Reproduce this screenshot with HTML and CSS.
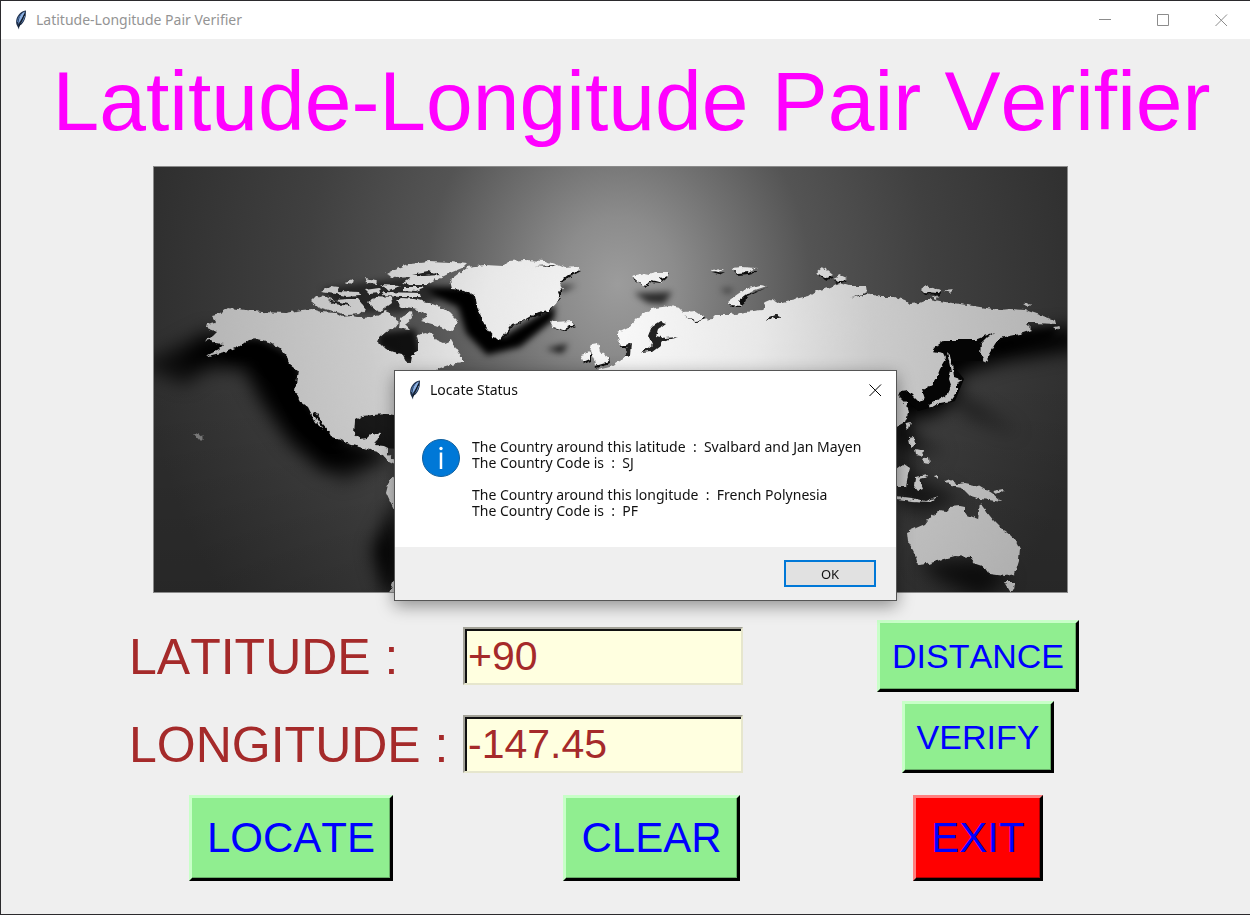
FILE: index.html
```html
<!DOCTYPE html>
<html lang="en">
<head>
<meta charset="utf-8">
<title>Latitude-Longitude Pair Verifier</title>
<link rel="stylesheet" href="styles.css">
</head>
<body>
<svg class="defs" aria-hidden="true">
  <symbol id="feather" viewBox="0 0 12 20">
    <path d="M11 0.500C7 1 3 4 1.500 9C0.800 12 1 14 2.500 16.500L4 19.500L4.300 16C8 14 10 10 10.700 6Z" fill="#1d2f4c"/>
    <path d="M10 1.500C6 3 4 7 3.200 14C6 10 8.500 6 10 1.500Z" fill="#8db2e4"/>
    <path d="M9.500 6C9 9 7 12 5 14" stroke="#6d90c2" stroke-width="1" fill="none"/>
    <path d="M6 4.500C4 6 2.500 9 2.500 12" stroke="#5077ad" stroke-width="1" fill="none"/>
    <path d="M9.700 4L3.700 17" stroke="#101820" stroke-width="1" fill="none"/>
  </symbol>
</svg>
<main class="window">
  <header class="titlebar">
    <svg class="feather"><use href="#feather"/></svg>
    <span class="titlebar-text">Latitude-Longitude Pair Verifier</span>
    <div class="controls">
      <button class="control" type="button" aria-label="Minimize"><svg viewBox="0 0 13 13"><path d="M0 5.500H12"/></svg></button>
      <button class="control" type="button" aria-label="Maximize"><svg viewBox="0 0 13 13"><path d="M0.500 0.500H11.500V11.500H0.500Z"/></svg></button>
      <button class="control" type="button" aria-label="Close"><svg viewBox="0 0 13 13"><path d="M0.500 0.500L12 12M12 0.500L0.500 12"/></svg></button>
    </div>
  </header>

  <h1 class="heading">Latitude-Longitude Pair Verifier</h1>

  <div class="map">
    <svg viewBox="153 167 915 427" role="img" aria-label="World map">
      <defs>
        <radialGradient id="sea" gradientUnits="userSpaceOnUse" cx="618" cy="285" r="480" gradientTransform="translate(618 285) scale(1 1.150) translate(-618 -285)">
          <stop offset="0" stop-color="#9c9c9c"/><stop offset="0.120" stop-color="#8c8c8c"/><stop offset="0.250" stop-color="#717171"/><stop offset="0.400" stop-color="#545454"/><stop offset="0.650" stop-color="#404040"/><stop offset="1" stop-color="#2e2e2e"/>
        </radialGradient>
        <radialGradient id="land" gradientUnits="userSpaceOnUse" cx="620" cy="330" r="460">
          <stop offset="0" stop-color="#f8f8f8"/><stop offset="0.300" stop-color="#e8e8e8"/><stop offset="0.550" stop-color="#cbcbcb"/><stop offset="1" stop-color="#b0b0b0"/>
        </radialGradient>
        <linearGradient id="floor" x1="0" y1="0" x2="0" y2="1">
          <stop offset="0.500" stop-color="#000" stop-opacity="0"/><stop offset="1" stop-color="#000" stop-opacity="0.150"/>
        </linearGradient>
        <filter id="soft" x="-30%" y="-30%" width="160%" height="160%"><feGaussianBlur stdDeviation="9"/></filter>
        <filter id="near" x="-30%" y="-30%" width="160%" height="160%"><feGaussianBlur stdDeviation="3"/></filter>
        <filter id="coast" x="-5%" y="-5%" width="110%" height="110%">
          <feTurbulence type="fractalNoise" baseFrequency="0.180" numOctaves="2" seed="4"/>
          <feDisplacementMap in="SourceGraphic" scale="5" xChannelSelector="R" yChannelSelector="G"/>
        </filter>
      </defs>
      <rect x="153" y="167" width="915" height="427" fill="url(#sea)"/>
      <rect x="153" y="167" width="915" height="427" fill="url(#floor)"/>

      <g filter="url(#soft)">
        <path d="M175 368L205 336L250 340L290 355L310 402L345 440L392 452L350 468L325 474L290 444L262 404L244 370L215 368Z"/>
        <path d="M140 366L210 330L230 354L185 386Z" opacity="0.700"/>
        <path d="M310 420L390 462L340 484Z" opacity="0.600"/>
        <path d="M398 500L398 594L385 594L372 550Z"/>
        <path d="M925 352L985 336L1080 328L1080 350L1005 362L960 375L955 404L930 418L905 420L915 440L945 455L895 445L890 370Z"/>
        <path d="M955 392L1020 435L965 415Z" opacity="0.600"/>
        <path d="M890 420L920 480L960 500L920 515L894 500Z" opacity="0.600"/>
        <path d="M915 562L985 560L1010 580L980 600L940 582Z" opacity="0.700"/>
      </g>
      <g filter="url(#near)">
        <path d="M220 344L260 342L285 356L298 372L296 398L318 424L345 445L330 448L296 418L280 380L255 360L225 358Z"/>
        <path d="M425 288L475 288L485 320L503 338L555 306L554 320L520 348L487 356L466 334L458 308L440 300Z"/>
        <path d="M378 334L415 330L421 358L410 366L378 348Z" opacity="0.800"/>
        <path d="M634 294L672 293L664 305L648 304Z" opacity="0.700"/>
        <path d="M546 350L568 345L562 354Z" opacity="0.900"/>
        <path d="M556 287L577 286L562 293Z" opacity="0.700"/>
        <path d="M720 290L734 290L728 294Z" opacity="0.700"/>
        <path d="M322 290L420 276L440 300L400 314L340 312Z" opacity="0.500"/>
        <path d="M985 338L1060 328L1050 340L1000 352Z" opacity="0.800"/>
      </g>
      <g fill="#050505">
        <path d="M348 410H400V450L350 447Z" opacity="0.700"/>
        <path d="M898 378L925 388L948 360L964 380L955 402L918 412L905 400Z"/>
        <path d="M928 352L945 341L998 332L984 362L950 362Z"/>
      </g>

      <g filter="url(#coast)">
        <g fill="#111" transform="translate(1 1)">
          <path d="M450 281L467 270L508 266L558 268L580 271L560 282L560 298L548 312L512 325L500 341L482 322L474 296L452 290Z"/>
          <path d="M632 279L645 275L652 278L668 273L666 278L660 283L650 282L644 287Z"/>
          <path d="M550 322L572 322L574 326L563 331L553 328Z"/>
          <path d="M727 303L767 287L746 297L741 307L731 307Z"/>
          <path d="M711 273L724 272L718 275ZM732 271L757 271L748 274L736 275ZM816 275L833 277L826 280ZM833 280L847 280L838 284ZM921 291L941 292L939 295L924 294Z"/>
          <path d="M592 344L600 352L608 358L609 364L595 368ZM581 357L590 354L590 361L583 364Z"/>
          <path d="M618 341L621 347H628L635 344L700 324L703 318L650 325Z"/>
        </g>
        <g fill="url(#land)">
          <path d="M205 342L213 337L217 333L206 329L207 325L216 323L212 316L220 314L228 309L238 310L262 313L285 314L302 311L312 310L322 313L335 314L342 318L352 317L362 319L372 318L380 316L385 311L390 313L395 320L399 323L394 329L387 332L380 338L378 343L385 350L393 353L402 355L406 363L411 363L412 357L418 351L418 342L416 335L425 333L432 335L437 341L444 344L451 341L455 348L462 358L462 364L450 366L440 369L432 373L470 390L400 417L388 415L372 416L362 417L355 421L354 436L360 440L368 439L373 434L380 435L375 446L384 447L388 449L388 456L396 462V466L388 462L384 457L378 453L370 451L352 446L340 441L332 438L331 434L323 425L314 412L313 415L324 431L316 424L308 408L300 402L295 392L298 371L290 365L285 355L280 349L270 343L258 340L248 341L240 347L228 352L204 358L218 351L224 345L215 344L211 341Z"/>
          <path d="M450 281L467 268L485 266L503 267L508 262L525 261L545 262L558 266L565 269L578 268L580 271L568 276L560 282L562 288L558 293L560 298L556 305L548 312L535 315L525 321L512 325L506 333L500 341L493 338L487 330L482 322L481 316L476 306L474 296L465 291L452 290Z"/>
          <path d="M386 275L395 270L410 264L430 262L450 263L466 265L462 269L450 274L440 279L427 286L410 286L403 284L412 278L395 279Z"/>
          <path d="M311 302L316 297L326 298L335 301L348 300L358 300L366 310L360 315L348 316L332 312L318 308Z"/>
          <path d="M321 293L331 287L339 288L338 292L359 293L360 296L345 297L335 295Z"/>
          <path d="M345 283L354 281L353 285ZM364 279L377 281L376 285L366 283ZM365 291L379 289L380 294L369 295ZM382 293L420 294L421 298L400 298L385 297Z"/>
          <path d="M367 303L377 297L391 298L392 304L384 310L378 313L372 308Z"/>
          <path d="M396 302L402 299L414 300L427 303L440 308L450 314L459 323L455 327L449 332L441 328L432 325L421 322L428 318L422 312L412 310L402 308Z"/>
          <path d="M400 320L411 312L412 319L405 325L411 331L399 330Z"/>
          <path d="M380 286L400 287L390 291ZM404 288L425 288L415 292L404 291Z"/>
          <path d="M618 340L618 334L628 329L636 320L648 312L655 309L670 307L680 309L684 313L695 312L703 317L701 321L712 320L716 316L730 316L745 313L762 311L765 303L772 300L778 304L795 300L808 297L815 292L828 289L840 284L850 287L866 287L867 294L880 298L895 298L905 301L910 305L920 304L930 300L945 303L960 305L980 308L1000 311L1010 310L1025 311L1040 316L1055 321L1056 325L1034 324L1025 324L1032 331L1020 335L1000 339L996 345L990 355L985 364L980 355L981 345L988 338L995 333L975 341L945 341L935 348L932 352L943 354L946 360L940 370L936 380L932 386L922 391L925 400L919 403L914 398L908 392L900 393L897 396L906 405L908 415L905 423L892 430H600L593 372L610 368L625 359L629 355L628 346L621 346Z"/>
          <path d="M592 345L598 344L600 352L608 358L609 363L595 367L594 360L590 352ZM581 356L590 353L590 360L583 363Z"/>
          <path d="M550 322L554 323L572 322L574 325L563 331L553 328Z"/>
          <path d="M632 277L645 274L650 275L654 273L668 273L668 277L660 279L663 284L656 282L650 281L644 287L636 281Z"/>
          <path d="M711 271L724 270L718 274ZM732 269L742 268L757 269L748 273L736 274Z"/>
          <path d="M727 303L735 297L745 290L760 286L767 287L755 291L746 296L739 302L741 307L731 306Z"/>
          <path d="M816 274L822 269L827 271L833 276L826 279ZM833 279L840 276L847 279L838 283ZM921 290L925 287L941 291L939 294L924 293ZM944 291L954 290L950 294ZM932 298L938 297L937 300ZM1023 305L1032 304L1028 308ZM1053 328L1060 327L1057 331Z"/>
          <path d="M947 353L950 356L953 370L954 378L963 381L956 384L956 395L951 402L940 404L930 410L928 406L938 401L948 395L951 386L949 380L951 372Z"/>
          <path d="M907 424L911 423L909 430L906 429ZM909 439L914 438L915 446L911 449ZM915 450L924 452L923 457L916 455ZM922 460L928 458L929 465L923 464Z"/>
          <path d="M896 471L904 465L910 469L908 477L906 488L896 488Z"/>
          <path d="M915 478L928 476L927 478L919 480L923 490L918 492L914 487ZM934 476L938 475L938 480ZM896 497L912 499L925 502L938 498L930 503L912 502L896 500Z"/>
          <path d="M945 482L950 480L957 485L965 484L980 487L992 494L1002 503L990 501L980 500L970 497L962 489L950 487ZM992 492L1002 490L1004 492L996 495Z"/>
          <path d="M907 533L925 525L930 518L938 512L947 513L950 508L960 507L965 508L965 515L978 520L980 504L986 512L994 522L1003 531L1015 540L1020 550L1019 562L1015 575L1005 577L990 575L985 568L976 565L970 558L955 557L940 561L928 565L918 566L915 555L908 542Z"/>
          <path d="M1004 583L1015 583L1014 590L1010 593Z"/>
          <path d="M396 475L388 485L386 493L390 502L396 514ZM396 575L389 594H396Z"/>
          <path d="M193 434L198 435L203 439L200 442Z" fill="#777"/>
        </g>
        <g fill="#202020">
          <path d="M641 354L652 346L648 337L652 327L660 322L666 324L658 330L656 337L665 339L678 338L663 342L660 347L652 353Z"/>
          <path d="M627 346L631 344L630 356L625 358Z"/>
          <path d="M684 317L695 322L703 321L696 324Z"/>
          <path d="M768 319L778 315L780 319L774 319L766 322Z"/>
          <path d="M850 299L868 293L867 295Z"/>
          <path d="M535 267L556 266L550 268Z"/>
          <path d="M328 300L348 305L350 307L334 305Z"/>
          <path d="M412 275L428 272L440 276L424 277Z"/>
        </g>
      </g>
    </svg>
  </div>

  <form class="panel">
    <label class="label" for="latitude">LATITUDE :</label>
    <input class="entry" id="latitude" type="text" value="+90">
    <button class="action small" type="button">DISTANCE</button>
    <label class="label" for="longitude">LONGITUDE :</label>
    <input class="entry" id="longitude" type="text" value="-147.45">
    <button class="action small raised" type="button">VERIFY</button>
    <button class="action" type="button">LOCATE</button>
    <button class="action" type="button">CLEAR</button>
    <button class="action exit" type="button">EXIT</button>
  </form>

  <section class="dialog" role="dialog" aria-labelledby="dialog-title">
    <header class="dialog-bar">
      <svg class="feather"><use href="#feather"/></svg>
      <h2 class="dialog-title" id="dialog-title">Locate Status</h2>
      <button class="dialog-close" type="button" aria-label="Close"><svg viewBox="0 0 13 13"><path d="M0.500 0.500L12 12M12 0.500L0.500 12"/></svg></button>
    </header>
    <div class="dialog-body">
      <svg class="info" viewBox="0 0 38 38" aria-hidden="true">
        <circle cx="19" cy="19" r="18.500" fill="#0078d7" stroke="#12609e"/>
        <circle cx="19" cy="9.500" r="1.700" fill="#fff"/>
        <path d="M19 13.500V30" stroke="#fff" stroke-width="2.500"/>
      </svg>
      <p class="message">The Country around this latitude  :  Svalbard and Jan Mayen
The Country Code is  :  SJ

The Country around this longitude  :  French Polynesia
The Country Code is  :  PF</p>
    </div>
    <footer class="dialog-footer"><button class="ok" type="button">OK</button></footer>
  </section>
</main>
</body>
</html>
```
FILE: styles.css
```css
* { box-sizing: border-box; }
body { margin: 0; background: #efefef; font-family: "Liberation Sans", Arial, sans-serif; }
button, input { font: inherit; margin: 0; }
.defs { position: absolute; width: 0; height: 0; }

.window {
  position: relative;
  min-height: 100vh;
  background: #efefef;
  border: 1px solid #2b2a2d;
  border-right: 0;
}
.titlebar {
  display: flex;
  align-items: center;
  height: 38px;
  padding-left: 14px;
  background: #fff;
  color: #949494;
  font: 14px/20px "Noto Sans", "Open Sans", sans-serif;
}
.feather { width: 12px; height: 20px; margin-right: 9px; }
.controls { display: flex; margin-left: auto; }
.control {
  display: flex;
  align-items: center;
  justify-content: center;
  width: 58px;
  height: 38px;
  padding: 0;
  border: 0;
  background: none;
}
.control svg, .dialog-close svg { width: 13px; height: 13px; fill: none; stroke: #8c8c8c; }

.heading {
  margin: 0;
  padding: 14px 0 17px 12px;
  color: #f0f;
  font-size: 84px;
  line-height: 96px;
  font-weight: 400;
  text-align: center;
  white-space: nowrap;
  font-kerning: none;
}

.map { padding: 0 182px 0 152px; }
.map svg { display: block; width: 100%; outline: 1px solid #8a8a8a; outline-offset: -1px; }

.panel {
  display: grid;
  grid-template-columns: 326fr 395fr 258fr;
  grid-template-rows: 88px 88px 100px;
  align-items: center;
  padding: 19px 143px 0 127px;
}
.label { padding: 2px 0 0 1px; color: #a52a2a; font-size: 50px; line-height: 56px; white-space: nowrap; font-kerning: none; }
.entry {
  width: 280px;
  height: 58px;
  margin-left: 9px;
  padding: 0 3px;
  color: #a52a2a;
  background: #ffffe0;
  border: 2px solid;
  border-color: #a3a298 #e6e6cd #e6e6cd #a3a298;
  border-radius: 0;
  box-shadow: inset 2px 2px 0 #111;
  font-size: 41px;
  outline: 0;
}
.action {
  justify-self: center;
  height: 86px;
  padding: 0 15px;
  color: #00f;
  background: #90ee90;
  border: 3px solid;
  border-color: #c8ffc8 #000 #000 #c8ffc8;
  box-shadow: inset -1px -1px 0 #68ad68;
  font-size: 42px;
  white-space: nowrap;
  font-kerning: none;
}
.small { height: 72px; padding: 0 12px; font-size: 34px; }
.raised { align-self: start; margin-top: 1px; }
.exit { background: red; border-color: #ff7f7f #000 #000 #ff7f7f; box-shadow: inset -1px -1px 0 #a00; }

.dialog {
  position: absolute;
  left: 393px;
  top: 369px;
  width: 503px;
  background: #fff;
  border: 1px solid #555;
  box-shadow: 0 5px 16px rgba(0, 0, 0, 0.4);
  color: #111;
  font: 14px/16px "Noto Sans", "Open Sans", sans-serif;
}
.dialog-bar { display: flex; align-items: center; height: 38px; padding: 0 14px; }
.dialog-title { margin: 0; font-size: 14px; line-height: 20px; font-weight: 400; }
.dialog-close { display: flex; margin-left: auto; padding: 0; border: 0; background: none; }
.dialog-close svg { stroke: #000; }
.dialog-body { display: flex; gap: 12px; padding: 30px 27px 28px; }
.info { flex: none; width: 38px; height: 38px; }
.message { margin: 0; white-space: pre; }
.dialog-footer { display: flex; justify-content: flex-end; padding: 13px 20px 13px; background: #efefef; }
.ok {
  width: 92px;
  height: 27px;
  padding: 0;
  color: #111;
  background: #e1e1e1;
  border: 2px solid #0078d7;
  font-size: 13px;
}
```
